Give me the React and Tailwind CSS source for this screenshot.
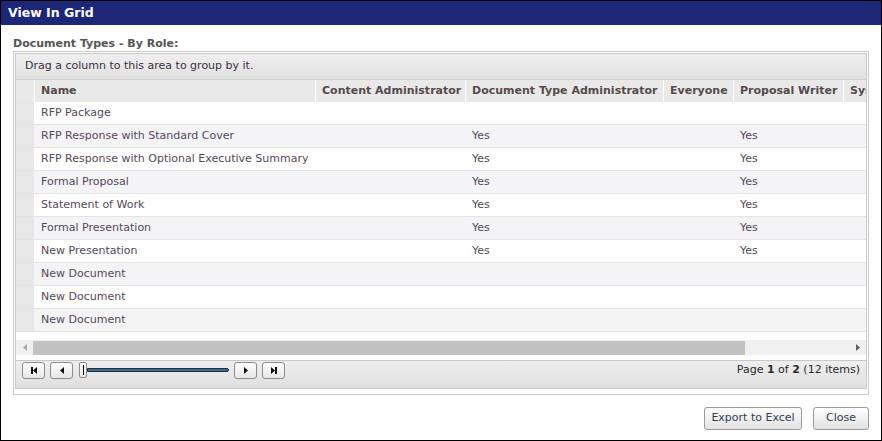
import React from "react";

const cols = [
  { key: "name", label: "Name", w: "w-[281px]" },
  { key: "content", label: "Content Administrator", w: "w-[150px]" },
  { key: "doctype", label: "Document Type Administrator", w: "w-[198px]" },
  { key: "everyone", label: "Everyone", w: "w-[70px]" },
  { key: "writer", label: "Proposal Writer", w: "w-[110px]" },
  { key: "system", label: "System Administrator", w: "w-[150px]" },
];

const rows = [
  { name: "RFP Package" },
  { name: "RFP Response with Standard Cover", doctype: "Yes", writer: "Yes" },
  { name: "RFP Response with Optional Executive Summary", doctype: "Yes", writer: "Yes" },
  { name: "Formal Proposal", doctype: "Yes", writer: "Yes" },
  { name: "Statement of Work", doctype: "Yes", writer: "Yes" },
  { name: "Formal Presentation", doctype: "Yes", writer: "Yes" },
  { name: "New Presentation", doctype: "Yes", writer: "Yes" },
  { name: "New Document" },
  { name: "New Document" },
  { name: "New Document" },
];

const PagerButton = ({ children }) => (
  <button
    type="button"
    className="flex h-[17px] w-[23px] items-center justify-center rounded-[3px] border border-[#8c8c8c] bg-gradient-to-b from-white to-[#e6e6e6]"
  >
    {children}
  </button>
);

const DialogButton = ({ children, className = "" }) => (
  <button
    type="button"
    className={`h-[23px] rounded-[3px] border border-[#9a9a9a] bg-gradient-to-b from-white to-[#e2e2e2] text-[11px] text-[#2e3f56] ${className}`}
  >
    {children}
  </button>
);

export default function App() {
  return (
    <div className="flex h-[441px] w-[882px] flex-col border border-black bg-white font-['DejaVu_Sans',sans-serif] text-[11px] text-[#555]">
      {/* ── Title bar ── */}
      <div className="flex h-[24px] shrink-0 items-center bg-[#1e2676] pl-[7px] text-[12.5px] font-bold text-white">
        View In Grid
      </div>

      <div className="px-[12px] pt-[12px]">
        <div className="font-bold leading-[13px] text-[#555]">Document Types - By Role:</div>

        {/* ── Frame ── */}
        <div className="mt-px h-[344px] border border-[#cccccc] p-px">
          <div className="overflow-hidden border border-[#c8c8c8]">
            {/* group panel */}
            <div className="flex h-[26px] items-center border-b border-[#d2d2d2] bg-gradient-to-b from-[#efefef] to-[#e1e1e1] pl-[9px] text-[#3c3040]">
              Drag a column to this area to group by it.
            </div>

            {/* header */}
            <div className="flex h-[22px] w-max bg-[#e9e9e9] font-bold text-[#564b4b]">
              <div className="w-[18px] shrink-0" />
              {cols.map((c) => (
                <div
                  key={c.key}
                  className={`${c.w} flex shrink-0 items-center border-l border-white pl-[6px] whitespace-nowrap`}
                >
                  {c.label}
                </div>
              ))}
            </div>

            {/* body */}
            <div className="h-[238px]">
              {rows.map((r, i) => (
                <div
                  key={i}
                  className={`flex h-[23px] w-max border-b border-[#e3e3e3] ${i % 2 ? "bg-[#f4f4f6]" : "bg-white"}`}
                >
                  <div className="w-[18px] shrink-0 bg-[#e7e7e7]" />
                  {cols.map((c) => (
                    <div
                      key={c.key}
                      className={`${c.w} flex shrink-0 items-center pl-[7px] whitespace-nowrap text-[#54485a]`}
                    >
                      {r[c.key] || ""}
                    </div>
                  ))}
                </div>
              ))}
            </div>

            {/* horizontal scrollbar */}
            <div className="flex h-[15px] items-center bg-[#f0f0f0]">
              <div className="flex w-[17px] shrink-0 justify-center">
                <svg width="4" height="7" viewBox="0 0 4 7"><path d="M4 0 L0 3.5 L4 7 Z" fill="#a8a8a8" /></svg>
              </div>
              <div className="h-[14px] w-[712px] bg-[#c1c1c1]" />
              <div className="flex-1" />
              <div className="flex w-[17px] shrink-0 justify-center">
                <svg width="4" height="7" viewBox="0 0 4 7"><path d="M0 0 L4 3.5 L0 7 Z" fill="#606060" /></svg>
              </div>
            </div>

            {/* pager */}
            <div className="mt-[5px] flex h-[28px] items-center border-t border-[#c8c8c8] bg-gradient-to-b from-[#eeeeee] to-[#e0e0e0] pr-[6px] pl-[6px] pb-[9px]">
              <div className="flex items-center gap-[5px]">
                <PagerButton>
                  <svg width="8" height="7" viewBox="0 0 8 7"><rect x="1" y="0" width="2" height="7" fill="#111" /><path d="M7 0 L3 3.5 L7 7 Z" fill="#111" /></svg>
                </PagerButton>
                <PagerButton>
                  <svg width="4" height="7" viewBox="0 0 4 7"><path d="M4 0 L0 3.5 L4 7 Z" fill="#111" /></svg>
                </PagerButton>
                <div className="ml-px flex items-center">
                  <div className="flex h-[16px] w-[8px] items-center justify-center rounded-[2px] border border-[#8c8c8c] bg-gradient-to-b from-white to-[#e6e6e6]">
                    <div className="h-[10px] w-px bg-black" />
                  </div>
                  <div className="h-[4px] w-[142px] rounded-r-[2px] border border-[#1f3344] bg-[#3f6a86]" />
                </div>
                <PagerButton>
                  <svg width="4" height="7" viewBox="0 0 4 7"><path d="M0 0 L4 3.5 L0 7 Z" fill="#111" /></svg>
                </PagerButton>
                <PagerButton>
                  <svg width="8" height="7" viewBox="0 0 8 7"><path d="M1 0 L5 3.5 L1 7 Z" fill="#111" /><rect x="5" y="0" width="2" height="7" fill="#111" /></svg>
                </PagerButton>
              </div>
              <div className="ml-auto text-[11px] text-[#2a2a2a]">
                Page <b>1</b> of <b>2</b> (12 items)
              </div>
            </div>
          </div>
        </div>

        {/* ── Footer buttons ── */}
        <div className="mt-[12px] flex justify-end gap-[11px]">
          <DialogButton className="w-[98px]">Export to Excel</DialogButton>
          <DialogButton className="w-[56px]">Close</DialogButton>
        </div>
      </div>
    </div>
  );
}
